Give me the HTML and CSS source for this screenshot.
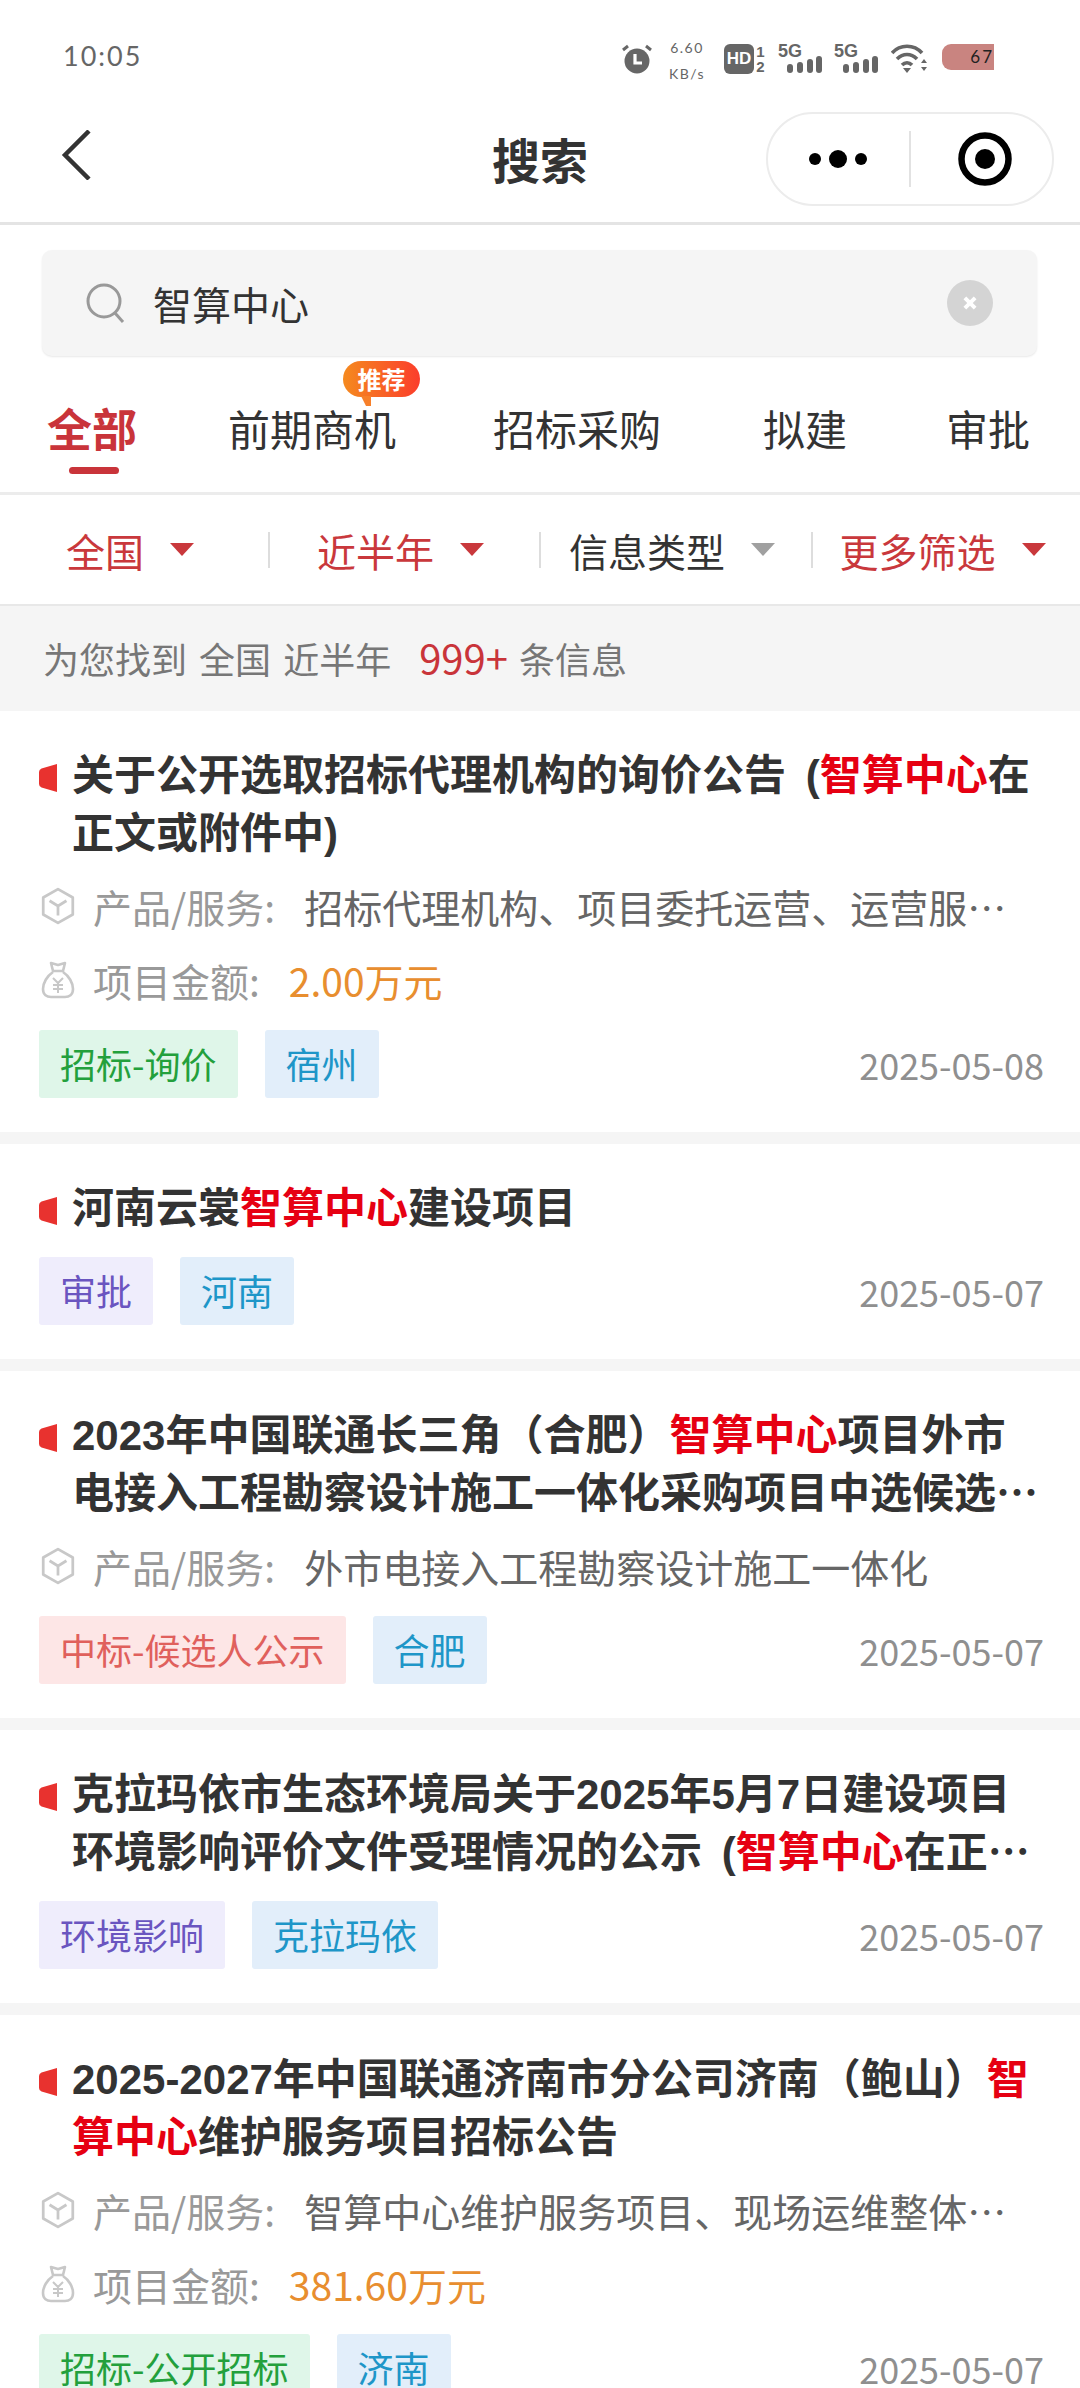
FILE: index.html
```html
<!DOCTYPE html>
<html>
<head>
  <meta charset="UTF-8">
  <title>搜索</title>
  <link rel="stylesheet" href="styles.css">
</head>
<body>
  <svg class="defs" width="0" height="0">
    <symbol id="flag" viewBox="0 0 18 28"><path d="M2.5 4.5 L18 0 V28 L2.5 23.5 Q0 22.5 0 20 V8 Q0 5.5 2.5 4.5 Z" fill="#e8322f"/></symbol>
    <symbol id="box" viewBox="0 0 32 36"><path d="M16 2 L30 10 V26 L16 34 L2 26 V10 Z M8 13 L16 18 L24 13 M16 18 V27" fill="none" stroke="#c8c8c8" stroke-width="2.6" stroke-linejoin="round"/></symbol>
    <symbol id="bag" viewBox="0 0 34 38"><path d="M10 2 L17 4 L24 2 L22 10 H12 Z M12 11 C6 15 2 22 2 28 C2 34 6 36 10 36 H24 C28 36 32 34 32 28 C32 22 28 15 22 11" fill="none" stroke="#c8c8c8" stroke-width="2.6" stroke-linejoin="round"/><path d="M12 17 L17 22 L22 17 M17 22 V32 M12 24 H22 M12 28 H22" fill="none" stroke="#c8c8c8" stroke-width="2"/></symbol>
  </svg>

  <div class="status-bar">
    <span class="time">10:05</span>
    <div class="status-icons">
      <svg class="ic-alarm" width="30" height="30" viewBox="0 0 30 30"><circle cx="15" cy="17" r="12.5" fill="#666"/><path d="M13 10 V19 H20" fill="none" stroke="#fff" stroke-width="3.2"/><path d="M1 6 L6 2 M29 6 L24 2" stroke="#666" stroke-width="3"/></svg>
      <div class="speed"><span>6.60</span><span>KB/s</span></div>
      <div class="hd"><span class="hd-box">HD</span><span class="hd-nums"><span>1</span><span>2</span></span></div>
      <div class="net"><span>5G</span><svg width="35" height="17" viewBox="0 0 35 17"><rect x="0" y="8" width="6" height="9" rx="3" fill="#666"/><rect x="10" y="6" width="6" height="11" rx="3" fill="#666"/><rect x="20" y="3" width="6" height="14" rx="3" fill="#666"/><rect x="29" y="0" width="6" height="17" rx="3" fill="#666"/></svg></div>
      <div class="net"><span>5G</span><svg width="35" height="17" viewBox="0 0 35 17"><rect x="0" y="8" width="6" height="9" rx="3" fill="#666"/><rect x="10" y="6" width="6" height="11" rx="3" fill="#666"/><rect x="20" y="3" width="6" height="14" rx="3" fill="#666"/><rect x="29" y="0" width="6" height="17" rx="3" fill="#666"/></svg></div>
      <svg class="ic-wifi" width="37" height="30" viewBox="0 0 37 30"><path d="M1 9 C9 0 23 0 31 9 M6 15 C12 9 20 9 26 15 M11 21 C14 18 18 18 21 21" fill="none" stroke="#666" stroke-width="3.6"/><path d="M12 24 H20 L16 29 Z M30 19 L33 15 L36 19 Z M30 23 H36 L33 27 Z" fill="#666"/></svg>
      <div class="battery">67</div>
    </div>
  </div>

  <header class="nav-bar">
    <svg class="back" width="32" height="50" viewBox="0 0 32 50"><path d="M29 1 L5 25 L29 49" fill="none" stroke="#333" stroke-width="4.5"/></svg>
    <h1>搜索</h1>
    <div class="capsule">
      <svg class="more" width="58" height="20" viewBox="0 0 58 20"><circle cx="6" cy="10" r="6" fill="#000"/><circle cx="29" cy="10" r="9" fill="#000"/><circle cx="52" cy="10" r="6" fill="#000"/></svg>
      <span class="capsule-line"></span>
      <svg width="54" height="54" viewBox="0 0 54 54"><circle cx="27" cy="27" r="23.5" fill="none" stroke="#000" stroke-width="6.5"/><circle cx="27" cy="27" r="10" fill="#000"/></svg>
    </div>
  </header>

  <div class="search-wrap">
    <div class="search-box">
      <svg width="42" height="42" viewBox="0 0 42 42"><circle cx="19" cy="19" r="16" fill="none" stroke="#999" stroke-width="3"/><path d="M30 31 L38 40" stroke="#999" stroke-width="3"/></svg>
      <span class="search-text">智算中心</span>
      <span class="clear"><svg width="16" height="16" viewBox="0 0 14 14"><path d="M2.5 2.5 L11.5 11.5 M11.5 2.5 L2.5 11.5" stroke="#fff" stroke-width="3.4"/></svg></span>
    </div>
  </div>

  <nav class="tabs">
    <span class="tab active">全部</span>
    <span class="tab">前期商机<span class="badge">推荐</span></span>
    <span class="tab">招标采购</span>
    <span class="tab">拟建</span>
    <span class="tab">审批</span>
  </nav>

  <div class="filters">
    <div class="filter red"><span>全国</span><i></i></div>
    <div class="filter red"><span>近半年</span><i></i></div>
    <div class="filter grey"><span>信息类型</span><i></i></div>
    <div class="filter red"><span>更多筛选</span><i></i></div>
  </div>

  <div class="summary">为您找到 全国 近半年<b>999+</b>条信息</div>

  <main class="list">
    <article class="card">
      <div class="title"><svg class="flag"><use href="#flag"/></svg><p>关于公开选取招标代理机构的询价公告 (<em>智算中心</em>在正文或附件中)</p></div>
      <div class="meta"><svg class="mi"><use href="#box"/></svg><span class="label">产品/服务:</span><span class="value">招标代理机构、项目委托运营、运营服务、招标代理服务</span></div>
      <div class="meta"><svg class="mi"><use href="#bag"/></svg><span class="label">项目金额:</span><span class="money">2.00万元</span></div>
      <div class="foot"><span class="tag green">招标-询价</span><span class="tag blue">宿州</span><time>2025-05-08</time></div>
    </article>
    <article class="card">
      <div class="title"><svg class="flag"><use href="#flag"/></svg><p>河南云裳<em>智算中心</em>建设项目</p></div>
      <div class="foot"><span class="tag purple">审批</span><span class="tag blue">河南</span><time>2025-05-07</time></div>
    </article>
    <article class="card">
      <div class="title"><svg class="flag"><use href="#flag"/></svg><p>2023年中国联通长三角（合肥）<em>智算中心</em>项目外市电接入工程勘察设计施工一体化采购项目中选候选<span class="dots">…</span></p></div>
      <div class="meta"><svg class="mi"><use href="#box"/></svg><span class="label">产品/服务:</span><span class="value">外市电接入工程勘察设计施工一体化</span></div>
      <div class="foot"><span class="tag pink">中标-候选人公示</span><span class="tag blue">合肥</span><time>2025-05-07</time></div>
    </article>
    <article class="card">
      <div class="title"><svg class="flag"><use href="#flag"/></svg><p>克拉玛依市生态环境局关于2025年5月7日建设项目环境影响评价文件受理情况的公示 (<em>智算中心</em>在正<span class="dots">…</span></p></div>
      <div class="foot"><span class="tag purple">环境影响</span><span class="tag blue">克拉玛依</span><time>2025-05-07</time></div>
    </article>
    <article class="card">
      <div class="title"><svg class="flag"><use href="#flag"/></svg><p>2025-2027年中国联通济南市分公司济南（鲍山）<em>智算中心</em>维护服务项目招标公告</p></div>
      <div class="meta"><svg class="mi"><use href="#box"/></svg><span class="label">产品/服务:</span><span class="value">智算中心维护服务项目、现场运维整体服务、维护服务</span></div>
      <div class="meta"><svg class="mi"><use href="#bag"/></svg><span class="label">项目金额:</span><span class="money">381.60万元</span></div>
      <div class="foot"><span class="tag green">招标-公开招标</span><span class="tag blue">济南</span><time>2025-05-07</time></div>
    </article>
  </main>
</body>
</html>
```

FILE: styles.css
```css
* {
  box-sizing: border-box;
}

html, body {
  margin: 0;
  height: 2388px;
  overflow: hidden;
}

body {
  background: #fff;
  color: #333;
  font-family: "Noto Sans CJK SC", "Noto Sans", sans-serif;
}

.defs {
  display: block;
  height: 0;
}

/* status bar */
.status-bar {
  height: 100px;
  padding: 36px 86px 0 63px;
  display: flex;
  justify-content: space-between;
  align-items: flex-start;
}

.time {
  font-family: "Lato", sans-serif;
  font-size: 27px;
  line-height: 40px;
  color: #666;
  letter-spacing: 2px;
}

.status-icons {
  display: flex;
  align-items: flex-start;
  padding-top: 8px;
}

.ic-alarm {
  margin-right: 16px;
}

.speed {
  width: 38px;
  margin-right: 18px;
  margin-top: -9px;
  display: flex;
  flex-direction: column;
  align-items: center;
  font-family: "Lato", sans-serif;
  font-size: 14px;
  line-height: 26px;
  color: #666;
  letter-spacing: 1.5px;
}

.hd {
  display: flex;
  align-items: center;
  margin-right: 12px;
}

.hd-box {
  width: 30px;
  height: 30px;
  border-radius: 6px;
  background: #666;
  color: #fff;
  font: bold 17px/30px "Liberation Sans", sans-serif;
  text-align: center;
}

.hd-nums {
  display: flex;
  flex-direction: column;
  width: 11px;
  margin-left: 1px;
  font: bold 15px/15px "Liberation Sans", sans-serif;
  color: #666;
  text-align: center;
}

.net {
  width: 44px;
  margin-right: 12px;
  display: flex;
  flex-direction: column;
  font: bold 18px/15px "Liberation Sans", sans-serif;
  color: #666;
}

.net svg {
  align-self: flex-end;
  margin-top: -3px;
}

.ic-wifi {
  margin-right: 14px;
  margin-left: 1px;
}

.battery {
  width: 52px;
  height: 26px;
  border-radius: 9px 0 0 9px;
  background: #c98480;
  color: #222;
  font-family: "Lato", sans-serif;
  font-size: 17px;
  line-height: 26px;
  text-align: right;
  letter-spacing: 2px;
}

/* nav bar */
.nav-bar {
  position: relative;
  height: 125px;
  border-bottom: 3px solid #e4e4e4;
  padding-right: 26px;
  display: flex;
  align-items: center;
  justify-content: flex-end;
}

.back {
  position: absolute;
  left: 60px;
  top: 30px;
}

.nav-bar h1 {
  position: absolute;
  left: 0;
  right: 0;
  top: 23px;
  margin: 0;
  text-align: center;
  font-size: 48px;
  line-height: 70px;
  font-weight: 700;
}

.capsule {
  width: 288px;
  height: 94px;
  margin-top: -4px;
  border: 2px solid #ececec;
  border-radius: 47px;
  padding: 0 40px 0 41px;
  display: flex;
  align-items: center;
  justify-content: space-between;
}

.capsule-line {
  width: 2px;
  height: 56px;
  margin-right: 6px;
  background: #e2e2e2;
}

/* search */
.search-wrap {
  padding: 25px 43px 0 42px;
}

.search-box {
  height: 106px;
  border-radius: 10px;
  background: #f5f5f5;
  box-shadow: 0 1px 2px #e8e8e8;
  padding: 0 44px 0 43px;
  display: flex;
  align-items: center;
}

.search-text {
  flex: 1;
  margin-left: 26px;
  font-size: 39px;
}

.clear {
  width: 46px;
  height: 46px;
  border-radius: 50%;
  background: #d4d4d4;
  display: flex;
  align-items: center;
  justify-content: center;
}

/* tabs */
.tabs {
  height: 139px;
  border-bottom: 3px solid #ececec;
  padding: 41px 0 0 47px;
  display: flex;
}

.tab {
  position: relative;
  font-size: 42px;
  line-height: 62px;
  color: #333;
}

.tab:nth-child(2) {
  margin-left: 91px;
}

.tab:nth-child(3) {
  margin-left: 97px;
}

.tab:nth-child(4) {
  margin-left: 102px;
}

.tab:nth-child(5) {
  margin-left: 99px;
}

.tab.active {
  font-size: 45px;
  font-weight: 700;
  color: #c9343a;
}

.tab.active::after {
  content: "";
  position: absolute;
  left: 22px;
  top: 70px;
  width: 50px;
  height: 7px;
  border-radius: 4px;
  background: #c9343a;
}

.badge {
  position: absolute;
  left: 115px;
  top: -36px;
  width: 77px;
  height: 36px;
  border-radius: 18px;
  background: linear-gradient(90deg, #f58a1f, #fb3d2b);
  color: #fff;
  font-size: 24px;
  font-weight: 700;
  line-height: 36px;
  text-align: center;
}

.badge::after {
  content: "";
  position: absolute;
  left: 18px;
  bottom: -9px;
  border-left: 5px solid transparent;
  border-right: 5px solid #f7802a;
  border-top: 10px solid #f7802a;
  border-bottom: 0;
}

/* filters */
.filters {
  height: 111px;
  border-bottom: 2px solid #e8e8e8;
  display: grid;
  grid-template-columns: 270px 271px 272px 1fr;
  align-items: center;
}

.filter {
  height: 36px;
  padding-right: 8px;
  border-right: 2px solid #ddd;
  display: flex;
  align-items: center;
  justify-content: center;
  gap: 26px;
  font-size: 39px;
}

.filter:last-child {
  border-right: 0;
}

.filter span {
  line-height: 36px;
}

.filter i {
  width: 0;
  height: 0;
  border-left: 12px solid transparent;
  border-right: 12px solid transparent;
  border-top: 13px solid currentColor;
}

.filter.red {
  color: #c9383c;
}

.filter.grey {
  color: #333;
}

.filter.grey i {
  border-top-color: #a0a0a0;
}

/* summary */
.summary {
  height: 105px;
  background: #f5f5f5;
  padding-left: 43px;
  font-size: 36px;
  line-height: 102px;
  word-spacing: 4px;
  color: #777;
}

.summary b {
  margin: 0 11px 0 28px;
  font-size: 40px;
  font-weight: 400;
  color: #c9343a;
}

/* result cards */
.list {
  background: #f5f5f5;
  display: flex;
  flex-direction: column;
  gap: 12px;
}

.card {
  background: #fff;
  padding: 36px 36px 0 39px;
}

.title {
  display: flex;
  align-items: flex-start;
  margin-bottom: 6px;
}

.flag {
  flex: none;
  width: 18px;
  height: 28px;
  margin: 17px 15px 0 0;
}

.title p {
  margin: 0;
  font-family: "Liberation Sans", "Noto Sans CJK SC", sans-serif;
  font-size: 42px;
  line-height: 58px;
  font-weight: 700;
  word-spacing: 8px;
  color: #333;
}

.title em {
  font-style: normal;
  color: #e60012;
}

.dots {
  font-family: "Noto Sans CJK SC", sans-serif;
  line-height: 0;
}

.meta {
  height: 74px;
  display: flex;
  align-items: center;
  font-size: 39px;
  white-space: nowrap;
}

.mi {
  flex: none;
  width: 36px;
  height: 38px;
  margin: 0 17px 0 1px;
}

.label {
  margin-right: 29px;
  color: #999;
}

.value {
  overflow: hidden;
  text-overflow: ellipsis;
  color: #666;
}

.money {
  color: #e88e2f;
}

.foot {
  height: 68px;
  margin: 13px 0 34px;
  display: flex;
  align-items: center;
}

.title + .foot {
  margin-top: 19px;
}

.tag {
  height: 68px;
  margin-right: 27px;
  padding: 0 21px;
  border-radius: 3px;
  font-size: 36px;
  line-height: 66px;
}

.tag.green {
  background: #dff6e9;
  color: #23a03c;
}

.tag.blue {
  background: #e2eefa;
  color: #1e96c8;
}

.tag.purple {
  background: #efedfc;
  color: #6a55c0;
}

.tag.pink {
  background: #fde6e6;
  color: #e0605c;
}

time {
  margin-left: auto;
  font-size: 36px;
  color: #8f8f8f;
}
```
